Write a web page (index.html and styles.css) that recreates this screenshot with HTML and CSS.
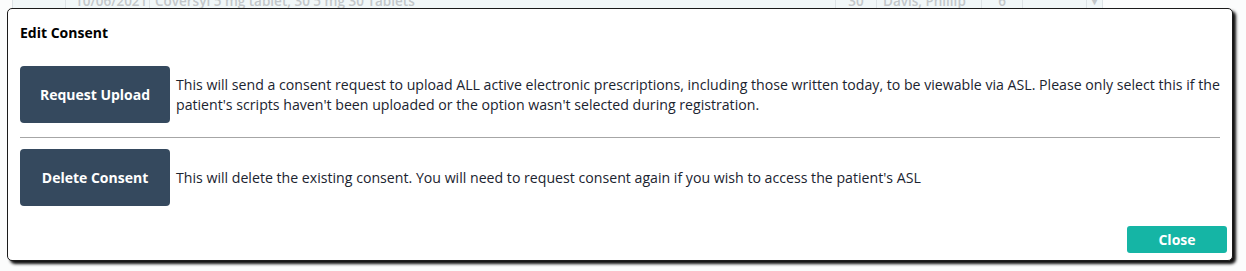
FILE: index.html
```html
<!DOCTYPE html>
<html lang="en">
<head>
<meta charset="utf-8">
<title>Edit Consent</title>
<link rel="stylesheet" href="styles.css">
</head>
<body>
<div class="page">
  <div class="grid-row">
    <div class="cell c1"></div>
    <div class="cell c2"></div>
    <div class="cell c3">10/06/2021</div>
    <div class="cell c4">Coversyl 5 mg tablet, 30 5 mg 30 Tablets</div>
    <div class="cell c5">30</div>
    <div class="cell c6">Davis, Phillip</div>
    <div class="cell c7">6</div>
    <div class="cell c8"></div>
    <div class="cell c9">&#9662;</div>
    <div class="cell c10"></div>
  </div>
</div>
<div class="modal">
  <div class="modal-title">Edit Consent</div>
  <div class="option">
    <button class="btn-dark">Request Upload</button>
    <p class="option-text">This will send a consent request to upload ALL active electronic prescriptions, including those written today, to be viewable via ASL. Please only select this if the patient's scripts haven't been uploaded or the option wasn't selected during registration.</p>
  </div>
  <hr class="divider">
  <div class="option">
    <button class="btn-dark">Delete Consent</button>
    <p class="option-text">This will delete the existing consent. You will need to request consent again if you wish to access the patient's ASL</p>
  </div>
  <div class="modal-footer">
    <button class="btn-close">Close</button>
  </div>
</div>
</body>
</html>
```
FILE: styles.css
```css
html, body {
  margin: 0;
  padding: 0;
}
body {
  background: #fbfcfc;
  font-family: "Open Sans", "Noto Sans", sans-serif;
  width: 1246px;
  height: 271px;
  overflow: hidden;
}
.page {
  height: 271px;
}
.grid-row {
  display: flex;
  height: 20px;
  margin-top: -9px;
  color: #c3c7ca;
  font-size: 13.5px;
  font-weight: 600;
  line-height: 20px;
}
.cell {
  border-right: 1px solid #dde3e6;
  box-sizing: border-box;
  white-space: nowrap;
  overflow: hidden;
  background: #f1f7f8;
}
.c1 { width: 13px; background: #fbfcfc; }
.c2 { width: 53px; }
.c3 { width: 84px; padding-left: 9px; }
.c4 { width: 686px; padding-left: 5px; }
.c5 { width: 41px; text-align: center; }
.c6 { width: 105px; padding-left: 6px; }
.c7 { width: 41px; text-align: center; }
.c8 { width: 64px; }
.c9 { width: 16px; text-align: center; font-size: 10px; }
.c10 { flex: 1; border-right: none; background: #fbfcfc; }

.modal {
  position: absolute;
  left: 7px;
  top: 8px;
  width: 1226px;
  height: 253px;
  box-sizing: border-box;
  background: #ffffff;
  border: 1px solid #1a1a1a;
  border-radius: 5px;
  box-shadow: 3px 3px 3px rgba(0, 0, 0, 0.95);
  padding: 14px 5px 7px 12px;
  display: flex;
  flex-direction: column;
  color: #1b1b1b;
}
.modal-title {
  font-size: 14px;
  font-weight: 700;
  line-height: 20px;
  color: #000;
  margin-bottom: 23px;
}
.option {
  display: flex;
  align-items: center;
  gap: 6px;
}
.btn-dark {
  flex: none;
  width: 150px;
  height: 57px;
  background: #35495e;
  color: #fff;
  border: none;
  border-radius: 4px;
  font-family: inherit;
  font-size: 14px;
  font-weight: 700;
  padding: 0;
}
.option-text {
  flex: none;
  margin: 0;
  font-size: 14.15px;
  line-height: 20px;
  color: #1b2430;
  width: 1062px;
}
.divider {
  border: none;
  border-top: 1px solid #a6a6a6;
  margin: 14px 7px 11px 0;
  height: 0;
}
.modal-footer {
  margin-top: auto;
  display: flex;
  justify-content: flex-end;
}
.btn-close {
  width: 100px;
  height: 27px;
  background: #15b5a5;
  color: #fff;
  border: none;
  border-radius: 3px;
  font-family: inherit;
  font-size: 14px;
  font-weight: 700;
  padding: 0;
}
```
